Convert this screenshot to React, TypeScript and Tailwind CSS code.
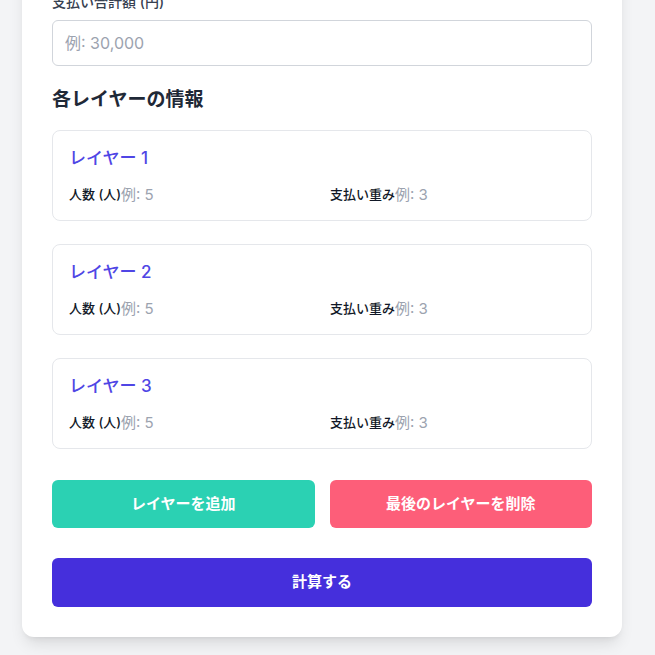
const layers = [1, 2, 3]

function LayerCard({ index }: { index: number }) {
  return (
    <div className="h-[91px] rounded-lg border border-[#e5e7eb] px-4 pt-[15px]">
      <h3 className="text-[17px] leading-6 font-medium text-[#4f46e5]">レイヤー {index}</h3>
      <div className="mt-[15px] grid grid-cols-2 gap-4">
        <div className="flex h-5 items-center">
          <label className="shrink-0 text-[13px] font-medium text-[#111827]">人数 (人)</label>
          <input
            className="min-w-0 flex-1 bg-transparent text-[15px] text-gray-700 outline-none placeholder:text-[#9ca3af]"
            placeholder="例: 5"
          />
        </div>
        <div className="flex h-5 items-center">
          <label className="shrink-0 text-[13px] font-medium text-[#111827]">支払い重み</label>
          <input
            className="min-w-0 flex-1 bg-transparent text-[15px] text-gray-700 outline-none placeholder:text-[#9ca3af]"
            placeholder="例: 3"
          />
        </div>
      </div>
    </div>
  )
}

export default function App() {
  return (
    <div
      className="h-[655px] overflow-hidden bg-[#f3f4f6]"
      style={{ fontFamily: 'Inter, "Noto Sans CJK JP", sans-serif' }}
    >
      <div className="mt-[-38px] ml-[22px] w-[600px] rounded-xl bg-white px-[30px] pt-[30px] pb-[30px] shadow-lg">
        <label className="block text-sm leading-5 font-medium text-[#374151]">支払い合計額 (円)</label>
        <input
          className="mt-2 block h-[46px] w-full rounded-md border border-[#d1d5db] px-3 text-base text-gray-800 outline-none placeholder:text-[#9ca3af]"
          placeholder="例: 30,000"
        />

        <h2 className="mt-5 text-[19px] leading-7 font-bold text-[#1f2937]">各レイヤーの情報</h2>

        <div className="mt-4 flex flex-col gap-[23px]">
          {layers.map((n) => (
            <LayerCard key={n} index={n} />
          ))}
        </div>

        <div className="mt-[31px] grid grid-cols-2 gap-[15px]">
          <button className="h-12 rounded-md bg-[#2bd1b3] text-[15px] font-bold text-white">
            レイヤーを追加
          </button>
          <button className="h-12 rounded-md bg-[#fd5e79] text-[15px] font-bold text-white">
            最後のレイヤーを削除
          </button>
        </div>

        <button className="mt-[30px] h-[49px] w-full rounded-md bg-[#452fdc] text-[15px] font-bold text-white">
          計算する
        </button>
      </div>
    </div>
  )
}
